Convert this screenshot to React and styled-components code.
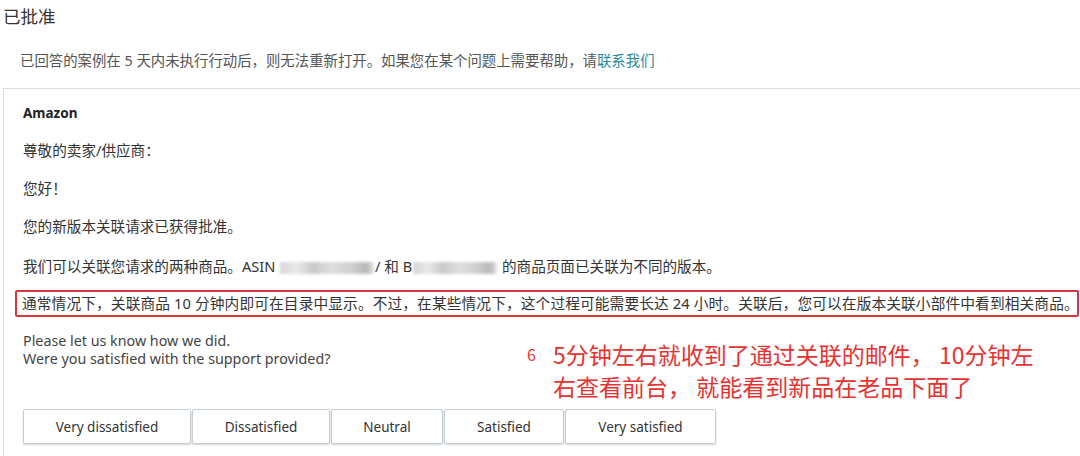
import React from "react";
import styled, { createGlobalStyle } from "styled-components";

const Global = createGlobalStyle`
  html, body { margin: 0; padding: 0; background: #fff; }
  body {
    width: 1080px; height: 456px; overflow: hidden;
    font-family: "Noto Sans", "Noto Sans CJK SC", sans-serif;
    color: #333;
  }
`;

const Page = styled.div`
  position: relative;
  padding: 0 0 0 3px;
  width: 1080px;
  height: 456px;
  overflow: hidden;
  box-sizing: border-box;
`;

const Title = styled.h2`
  margin: 0;
  padding-top: 4px;
  height: 26px;
  font-size: 17.5px;
  line-height: 24px;
  font-weight: 400;
  color: #333;
  font-family: "Noto Sans CJK SC", sans-serif;
`;

const Notice = styled.p`
  margin: 21px 0 0 17px;
  height: 37px;
  font-size: 14.4px;
  line-height: 20px;
  color: #555;
  font-family: "Noto Sans", "Noto Sans CJK SC", sans-serif;
  white-space: nowrap;
`;

const Link = styled.a`
  color: #2b8a98;
  text-decoration: none;
`;

const Card = styled.div`
  border: 1px solid #dcdcdc;
  border-right: none;
  width: 1100px;
  padding: 14px 20px 20px 19px;
  box-sizing: border-box;
`;

const Sender = styled.div`
  font-size: 13.5px;
  line-height: 20px;
  font-weight: 700;
  color: #222;
`;

const Para = styled.p`
  margin: ${(p) => p.$gap || 16}px 0 0;
  font-size: 14.6px;
  line-height: 22px;
  color: #333;
  font-family: "Noto Sans", "Noto Sans CJK SC", sans-serif;
  white-space: nowrap;
`;

const Blur = styled.span`
  display: inline-block;
  vertical-align: middle;
  width: ${(p) => p.$w}px;
  height: 12px;
  margin: 0 1px;
  background: linear-gradient(90deg, #d6d6d6 0%, #e8e8e8 18%, #c9c9c9 35%, #dedede 55%, #cfcfcf 75%, #b8b8b8 92%, #e6e6e6 100%);
  filter: blur(1.5px);
`;

const Highlight = styled.div`
  margin: 13px 0 0 -8px;
  width: 1064px;
  height: 27px;
  box-sizing: border-box;
  border: 2px solid #d8373f;
  border-radius: 2px;
  padding: 0 0 0 5px;
  font-size: 14.7px;
  letter-spacing: 0.12px;
  line-height: 23px;
  color: #333;
  white-space: nowrap;
  font-family: "Noto Sans", "Noto Sans CJK SC", sans-serif;
`;

const Survey = styled.div`
  margin-top: 15px;
  font-size: 14.3px;
  line-height: 18px;
  color: #444;
`;

const Buttons = styled.div`
  display: flex;
  margin-top: 41px;
`;

const RateButton = styled.button`
  width: ${(p) => p.$w}px;
  height: 35px;
  margin-right: 1px;
  background: #fff;
  border: 1px solid #c4ced4;
  border-radius: 2px;
  box-shadow: 0 1px 2px rgba(0, 0, 0, 0.18);
  font-family: "Noto Sans", sans-serif;
  font-size: 13.5px;
  color: #333;
  padding: 0;
`;

const Annotation = styled.div`
  position: absolute;
  left: 527px;
  top: 338px;
  display: flex;
  align-items: flex-start;
  color: #e8322f;
  font-family: "Noto Sans CJK SC", sans-serif;
`;

const AnnoNum = styled.span`
  font-size: 16px;
  line-height: 32px;
  width: 26px;
`;

const AnnoText = styled.div`
  font-size: 23px;
  line-height: 32px;
  width: 490px;
`;

const ratings = [
  ["Very dissatisfied", 168],
  ["Dissatisfied", 138],
  ["Neutral", 112],
  ["Satisfied", 120],
  ["Very satisfied", 151],
];

export default function App() {
  return (
    <Page>
      <Global />
      <Title>已批准</Title>
      <Notice>
        已回答的案例在 5 天内未执行行动后，则无法重新打开。如果您在某个问题上需要帮助，请
        <Link href="#">联系我们</Link>
      </Notice>
      <Card>
        <Sender>Amazon</Sender>
        <Para>尊敬的卖家/供应商：</Para>
        <Para>您好！</Para>
        <Para>您的新版本关联请求已获得批准。</Para>
        <Para $gap={18}>
          我们可以关联您请求的两种商品。ASIN <Blur $w={94} />/ 和 B<Blur $w={84} /> 的商品页面已关联为不同的版本。
        </Para>
        <Highlight>
          通常情况下，关联商品 10 分钟内即可在目录中显示。不过，在某些情况下，这个过程可能需要长达 24 小时。关联后，您可以在版本关联小部件中看到相关商品。
        </Highlight>
        <Survey>
          Please let us know how we did.
          <br />
          Were you satisfied with the support provided?
        </Survey>
        <Buttons>
          {ratings.map(([label, w]) => (
            <RateButton key={label} $w={w}>
              {label}
            </RateButton>
          ))}
        </Buttons>
      </Card>
      <Annotation>
        <AnnoNum>6</AnnoNum>
        <AnnoText>5分钟左右就收到了通过关联的邮件， 10分钟左右查看前台， 就能看到新品在老品下面了</AnnoText>
      </Annotation>
    </Page>
  );
}
